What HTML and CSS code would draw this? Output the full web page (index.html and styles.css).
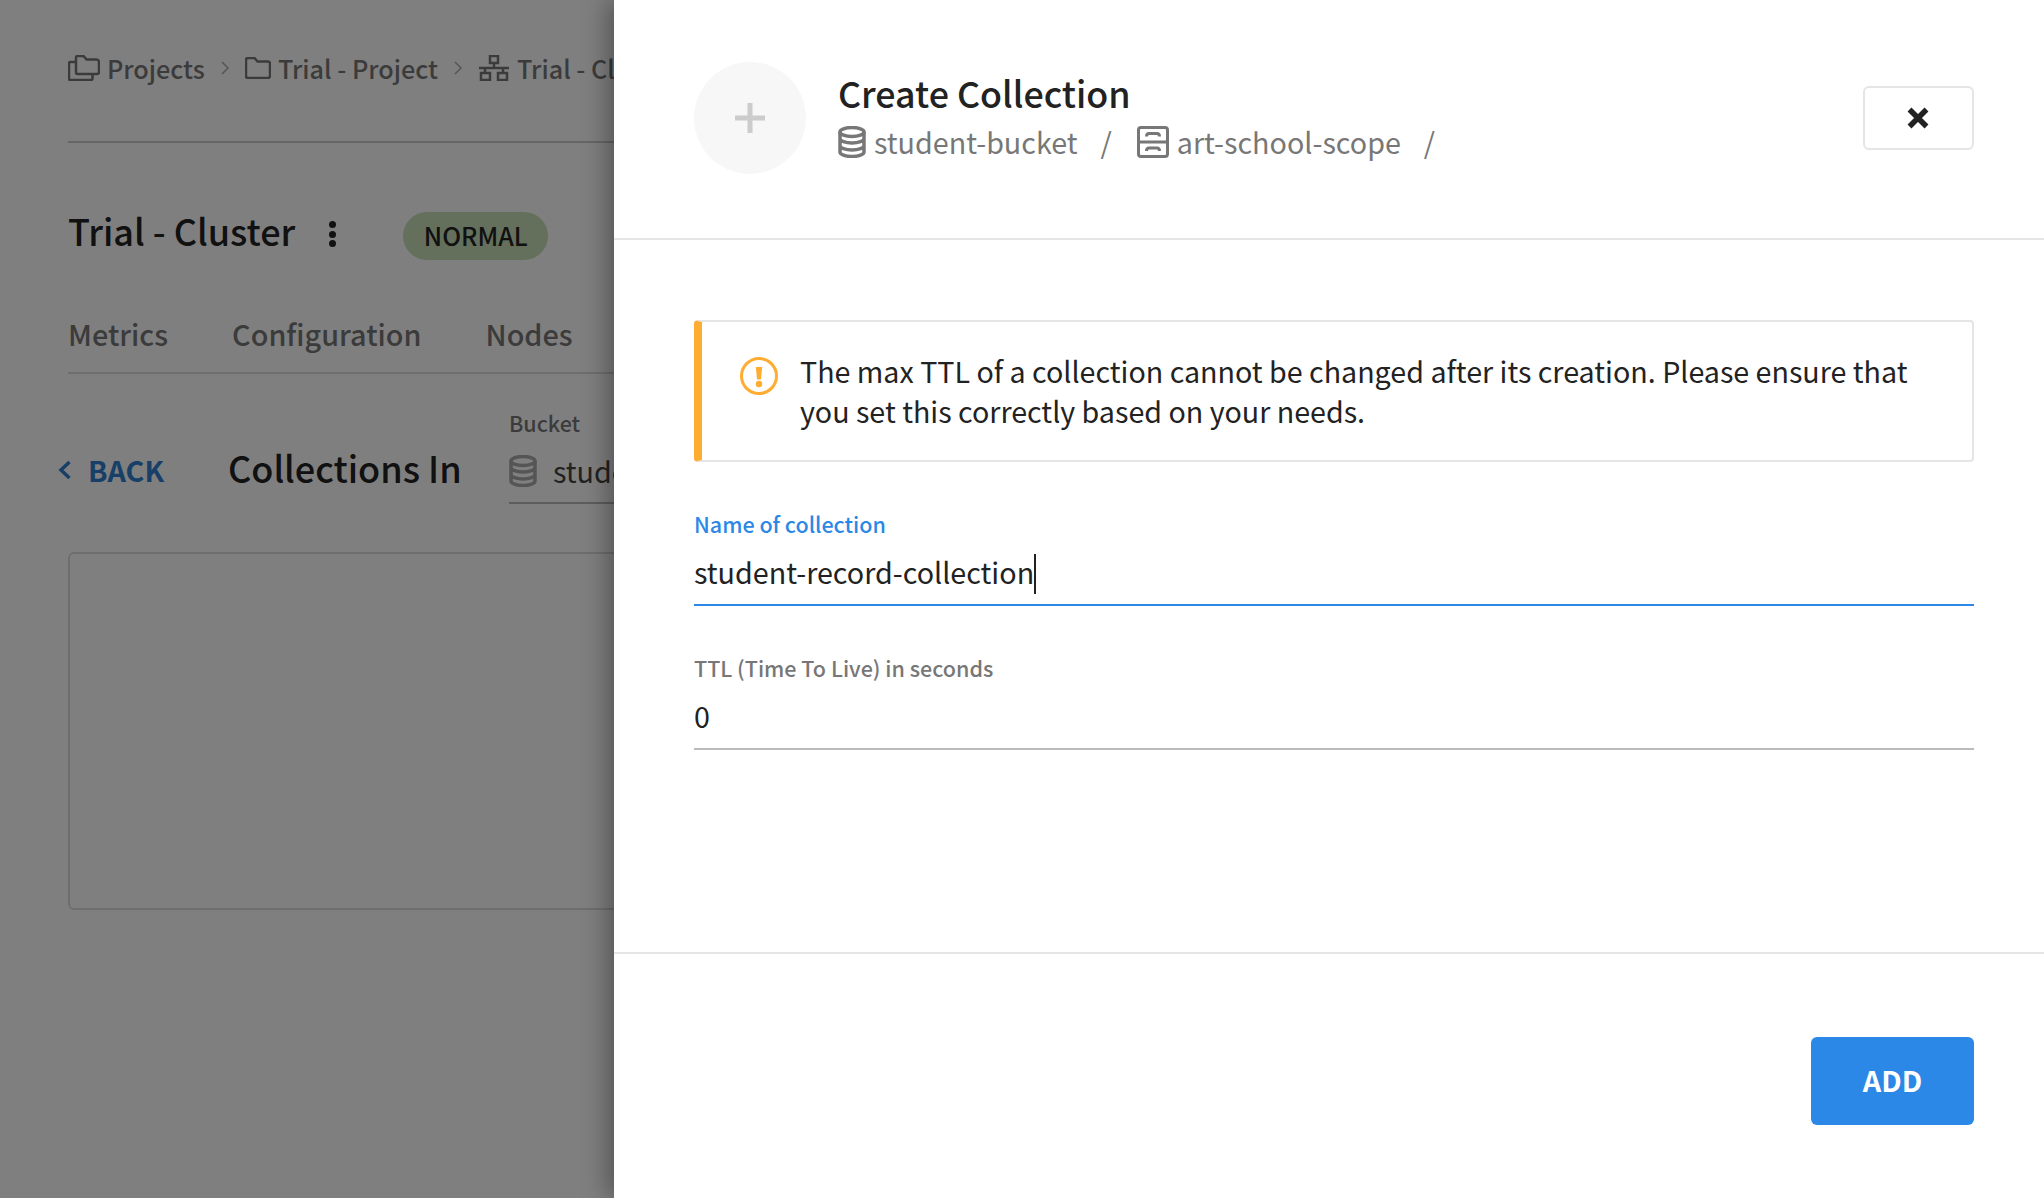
FILE: index.html
```html
<!DOCTYPE html>
<html lang="en">
<head>
  <meta charset="UTF-8">
  <title>Create Collection</title>
  <link rel="stylesheet" href="styles.css">
</head>
<body>

  <div class="page">
    <div class="crumbs">
      <svg class="crumb-icon crumb-icon-wide" viewBox="0 0 32 26"><path d="M8 5V2.500C8 1.700 8.700 1 9.500 1h6l3 3.500h10C29.500 4.500 31 5.500 31 7v10c0 1-.8 2-2 2H9.500C8.700 19 8 18.300 8 17.500V5zM8 7H2.500C1.700 7 1 7.700 1 8.500v15c0 .8.7 1.500 1.500 1.500H23c.8 0 1.500-.7 1.500-1.500V19"/></svg>
      <span>Projects</span>
      <svg class="crumb-sep" viewBox="0 0 10 16"><path d="M2 2l6 6-6 6"/></svg>
      <svg class="crumb-icon" viewBox="0 0 26 22"><path d="M1 3c0-1 .8-2 2-2h6.500l3 3.500H23c1 0 2 1 2 2V19c0 1-1 2-2 2H3c-1.200 0-2-1-2-2V3z"/></svg>
      <span>Trial - Project</span>
      <svg class="crumb-sep" viewBox="0 0 10 16"><path d="M2 2l6 6-6 6"/></svg>
      <svg class="crumb-icon crumb-icon-wide" viewBox="0 0 30 26"><path d="M11 1h8v7h-8zM2 18h9v7H2zM19 18h9v7h-9zM15 8v5M0 13h30M6 13v5M24 13v5"/></svg>
      <span>Trial - Cluster</span>
    </div>

    <div class="title-row">
      <h1 class="cluster-name">Trial - Cluster</h1>
      <div class="dots"><i></i><i></i><i></i></div>
      <span class="badge">NORMAL</span>
    </div>

    <div class="tabs">
      <span>Metrics</span>
      <span>Configuration</span>
      <span>Nodes</span>
    </div>

    <div class="back-row">
      <a class="back">
        <svg viewBox="0 0 14 20"><path d="M11.500 2L3 10l8.500 8"/></svg>
        BACK
      </a>
      <h2 class="collections-in">Collections In</h2>
      <div class="bucket-select">
        <div class="bucket-label">Bucket</div>
        <div class="bucket-value">
          <svg class="db-icon" viewBox="0 0 28 32"><ellipse cx="14" cy="6" rx="12" ry="4.500"/><path d="M2 6v20c0 2.500 5.400 4.500 12 4.500S26 28.500 26 26V6M2 12.500c0 2.500 5.400 4.500 12 4.500s12-2 12-4.500M2 19.500c0 2.500 5.400 4.500 12 4.500s12-2 12-4.500"/></svg>
          <span>student-bucket</span>
        </div>
      </div>
    </div>

    <div class="empty-box"></div>
  </div>

  <div class="overlay"></div>

  <div class="panel">
    <div class="panel-head">
      <div class="plus-circle">
        <svg viewBox="0 0 30 30"><path d="M15 0v30M0 15h30"/></svg>
      </div>
      <div class="head-text">
        <div class="head-title">Create Collection</div>
        <div class="head-path">
          <svg class="db-icon" viewBox="0 0 28 32"><ellipse cx="14" cy="6" rx="12" ry="4.500"/><path d="M2 6v20c0 2.500 5.400 4.500 12 4.500S26 28.500 26 26V6M2 12.500c0 2.500 5.400 4.500 12 4.500s12-2 12-4.500M2 19.500c0 2.500 5.400 4.500 12 4.500s12-2 12-4.500"/></svg>
          <span>student-bucket</span>
          <span class="slash">/</span>
          <svg class="scope-icon" viewBox="0 0 32 32"><rect x="1.500" y="1.500" width="29" height="29" rx="2.500"/><path d="M1.500 16h29M9.500 10.500c0-2 1-3 2.500-3h8c1.500 0 2.500 1 2.500 3M9.500 25c0-2 1-3 2.500-3h8c1.500 0 2.500 1 2.500 3"/></svg>
          <span>art-school-scope</span>
          <span class="slash">/</span>
        </div>
      </div>
      <button class="close-btn">
        <svg viewBox="0 0 24 24"><path d="M3.500 3.500l17 17M20.500 3.500l-17 17"/></svg>
      </button>
    </div>

    <div class="panel-body">
      <div class="alert">
        <svg class="alert-icon" viewBox="0 0 38 38"><circle cx="19" cy="19" r="17.500"/><path class="alert-mark" d="M15.800 10h6.400l-1.200 12.500h-4z"/><circle class="alert-mark" cx="19" cy="27" r="3.200"/></svg>
        <p>The max TTL of a collection cannot be changed after its creation. Please ensure that you set this correctly based on your needs.</p>
      </div>

      <div class="field field-active">
        <label>Name of collection</label>
        <div class="field-value">student-record-collection<span class="caret"></span></div>
      </div>

      <div class="field">
        <label>TTL (Time To Live) in seconds</label>
        <div class="field-value">0</div>
      </div>
    </div>

    <div class="panel-foot">
      <button class="add-btn">ADD</button>
    </div>
  </div>

</body>
</html>
```

FILE: styles.css
```css
* {
  box-sizing: border-box;
}

html, body {
  height: 100%;
}

body {
  margin: 0;
  overflow: hidden;
  position: relative;
  background: #fff;
  color: #222;
  font-family: "Noto Sans CJK SC", "Noto Sans", sans-serif;
}

.page {
  padding: 49px 0 0 68px;
  width: 1400px;
}

.crumbs {
  display: flex;
  align-items: center;
  height: 38px;
  font-size: 25.200px;
  line-height: 38px;
  color: #777;
  font-weight: 500;
}

.crumbs svg {
  flex: none;
  fill: none;
  stroke: #777;
  stroke-width: 2.500;
}

.crumb-icon {
  width: 26px;
  height: 22px;
  margin-right: 7px;
}

.crumb-icon-wide {
  width: 32px;
  height: 26px;
}

.crumbs .crumb-sep {
  width: 10px;
  height: 16px;
  margin: 0 15px;
  stroke: #aaa;
  stroke-width: 1.500;
}

.title-row {
  display: flex;
  align-items: center;
  border-top: 2px solid #ccc;
  margin-top: 54px;
  height: 140px;
  padding-top: 35px;
}

.cluster-name {
  margin: 0;
  font-size: 36px;
  line-height: 50px;
  font-weight: 500;
  color: #222;
}

.dots {
  display: flex;
  flex-direction: column;
  gap: 2.500px;
  margin: 9px 67px 0 34px;
}

.dots i {
  width: 7px;
  height: 7px;
  border-radius: 50%;
  background: #222;
}

.badge {
  display: block;
  width: 145px;
  height: 48px;
  margin-top: 13px;
  border-radius: 24px;
  background: #c9e0b8;
  text-align: center;
  font-size: 25px;
  line-height: 46px;
  font-weight: 500;
  color: #222;
}

.tabs {
  display: flex;
  gap: 64px;
  height: 93px;
  padding-top: 32px;
  border-bottom: 2px solid #ddd;
  font-size: 28.800px;
  line-height: 42px;
  font-weight: 500;
  color: #777;
}

.back-row {
  display: flex;
  align-items: flex-start;
  margin-left: -10px;
  padding-top: 33px;
}

.back {
  display: flex;
  align-items: center;
  gap: 16px;
  width: 170px;
  margin-top: 43px;
  font-size: 28.700px;
  line-height: 40px;
  font-weight: 700;
  color: #2f7fd0;
}

.back svg {
  width: 14px;
  height: 20px;
  fill: none;
  stroke: #2f7fd0;
  stroke-width: 3.500;
}

.collections-in {
  width: 281px;
  margin: 35px 0 0 0;
  font-size: 36px;
  line-height: 50px;
  font-weight: 500;
  color: #222;
}

.bucket-select {
  width: 400px;
  border-bottom: 2px solid #bbb;
}

.bucket-label {
  font-size: 21.500px;
  line-height: 32px;
  font-weight: 500;
  color: #777;
}

.bucket-value {
  display: flex;
  align-items: center;
  gap: 16px;
  height: 63px;
  font-size: 28.700px;
  color: #444;
}

.bucket-value .db-icon {
  stroke: #aaa;
}

.db-icon {
  flex: none;
  width: 28px;
  height: 32px;
  fill: none;
  stroke: #777;
  stroke-width: 3.500;
}

.empty-box {
  width: 1300px;
  height: 358px;
  margin-top: 48px;
  border: 2px solid #ddd;
  border-radius: 6px;
}

.overlay {
  position: absolute;
  inset: 0;
  background: rgba(0, 0, 0, 0.5);
}

.panel {
  position: absolute;
  top: 0;
  bottom: 0;
  left: 614px;
  right: 0;
  display: flex;
  flex-direction: column;
  background: #fff;
  box-shadow: -6px 0 24px rgba(0, 0, 0, 0.35);
}

.panel-head {
  display: flex;
  align-items: center;
  height: 240px;
  padding: 0 70px 3px 80px;
  border-bottom: 2px solid #e5e5e5;
}

.plus-circle {
  display: flex;
  align-items: center;
  justify-content: center;
  width: 112px;
  height: 112px;
  margin-right: 32px;
  border-radius: 50%;
  background: #f7f7f7;
}

.plus-circle svg {
  width: 30px;
  height: 30px;
  fill: none;
  stroke: #ccc;
  stroke-width: 5;
}

.head-text {
  flex: 1;
  padding-bottom: 5px;
}

.head-title {
  margin-bottom: 3px;
  font-size: 35.800px;
  line-height: 50px;
  font-weight: 500;
  color: #222;
}

.head-path {
  display: flex;
  align-items: center;
  height: 44px;
  font-size: 28.700px;
  color: #777;
}

.head-path .db-icon {
  margin-right: 8px;
}

.scope-icon {
  flex: none;
  width: 32px;
  height: 32px;
  margin-right: 8px;
  fill: none;
  stroke: #777;
  stroke-width: 3;
}

.slash {
  margin: 0 25px 0 23px;
}

.close-btn {
  display: flex;
  align-items: center;
  justify-content: center;
  width: 111px;
  height: 64px;
  padding: 0 2px 0 0;
  background: #fff;
  border: 2px solid #e5e5e5;
  border-radius: 6px;
}

.close-btn svg {
  width: 24px;
  height: 24px;
  fill: none;
  stroke: #222;
  stroke-width: 5.500;
}

.panel-body {
  flex: 1;
  padding: 80px 70px 0 80px;
}

.alert {
  display: flex;
  align-items: flex-start;
  height: 142px;
  padding: 29px 40px 0 38px;
  border: 2px solid #e5e5e5;
  border-left: 8px solid #ffac33;
  border-radius: 4px;
}

.alert p {
  margin: 0;
  font-size: 28.650px;
  line-height: 40px;
  color: #222;
}

.alert-icon {
  flex: none;
  width: 38px;
  height: 38px;
  margin: 6px 22px 0 0;
  fill: none;
  stroke: #ffac33;
  stroke-width: 3;
}

.alert-mark {
  fill: #ffac33;
  stroke: none;
}

.field {
  margin-top: 47px;
  border-bottom: 2px solid #bbb;
}

.field label {
  display: block;
  font-size: 21.500px;
  line-height: 30px;
  font-weight: 500;
  color: #777;
}

.field-value {
  height: 65px;
  padding-top: 9px;
  font-size: 28.700px;
  line-height: 48px;
  color: #222;
}

.field-active {
  border-bottom-color: #2b88e6;
}

.field-active label {
  color: #2b88e6;
}

.caret {
  display: inline-block;
  width: 2px;
  height: 40px;
  margin-left: 0;
  vertical-align: -10px;
  background: #222;
}

.panel-foot {
  display: flex;
  justify-content: flex-end;
  align-items: flex-start;
  height: 246px;
  padding: 83px 70px 0 0;
  border-top: 2px solid #e5e5e5;
}

.add-btn {
  width: 163px;
  height: 88px;
  padding: 0 0 4px;
  border: none;
  border-radius: 6px;
  background: #2b88e6;
  color: #fff;
  font-family: inherit;
  font-size: 28.700px;
  font-weight: 700;
}
```
